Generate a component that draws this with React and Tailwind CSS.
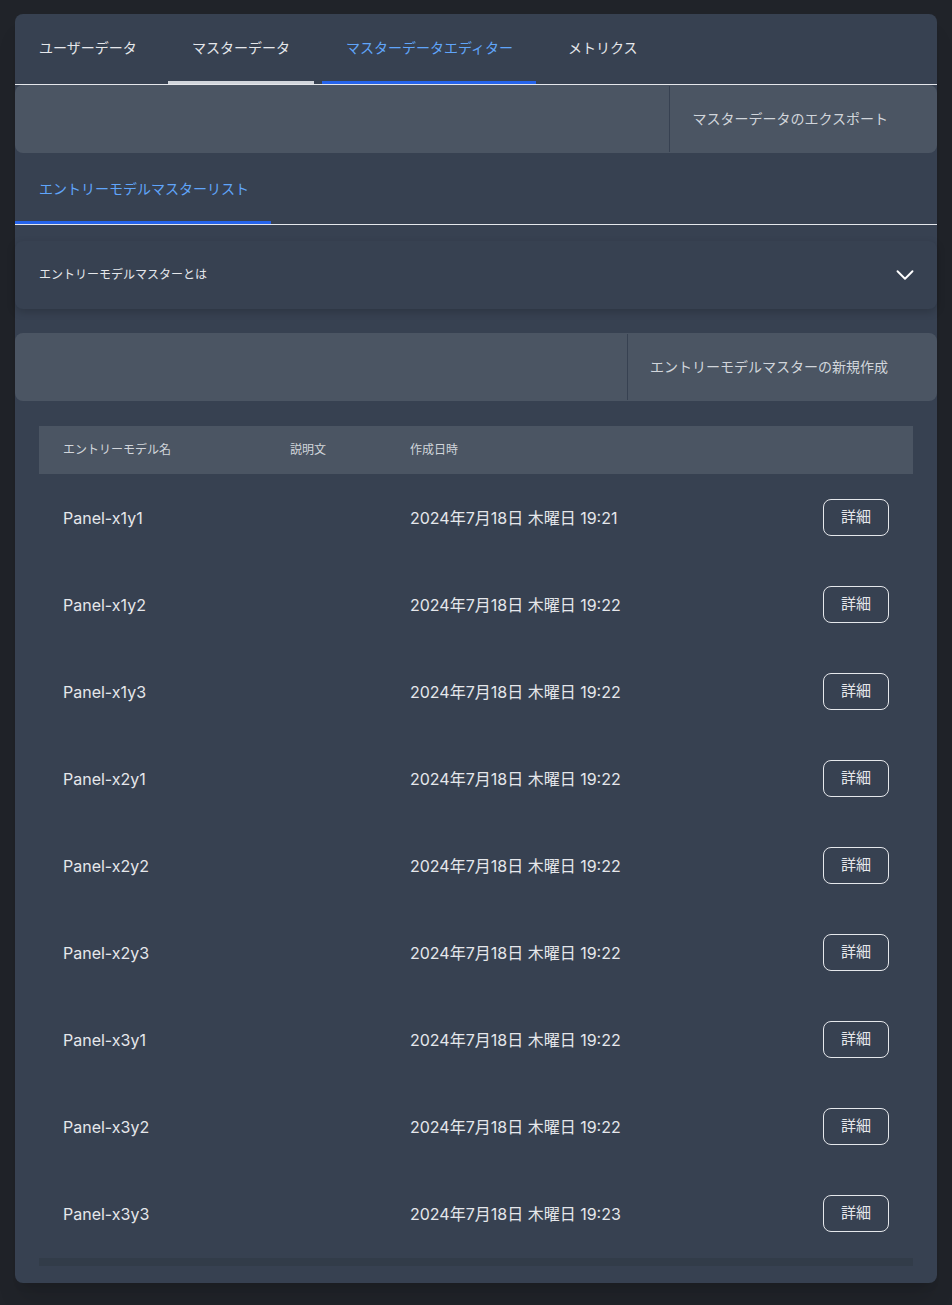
import React from 'react';
import { ChevronDown } from 'lucide-react';

const tabs = [
  { label: 'ユーザーデータ', w: 'w-[145px]', state: 'idle' },
  { label: 'マスターデータ', w: 'w-[146px]', state: 'gray' },
  { label: 'マスターデータエディター', w: 'w-[214px]', state: 'active' },
  { label: 'メトリクス', w: 'w-[140px]', state: 'idle' },
];

const rows = [
  ['Panel-x1y1', '19:21'],
  ['Panel-x1y2', '19:22'],
  ['Panel-x1y3', '19:22'],
  ['Panel-x2y1', '19:22'],
  ['Panel-x2y2', '19:22'],
  ['Panel-x2y3', '19:22'],
  ['Panel-x3y1', '19:22'],
  ['Panel-x3y2', '19:22'],
  ['Panel-x3y3', '19:23'],
];

const Toolbar = ({ label }) => (
  <div className="flex h-[68px] rounded-lg bg-[#4b5563] pr-6">
    <div className="flex-1" />
    <div className="my-px flex items-center border-l border-[#374151] pl-[22px] pr-[25px]">
      <span className="text-sm text-[#d1d5db]">{label}</span>
    </div>
  </div>
);

export default function App() {
  return (
    <div
      className="min-h-[1305px] bg-[#202329] px-[15px] pt-[14px] pb-[23px]"
      style={{ fontFamily: 'Inter, "Noto Sans CJK JP", sans-serif' }}
    >
      <div className="rounded-lg bg-[#374151] pb-[17px] shadow-xl">
        {/* Top tabs */}
        <div className="flex h-[71px] gap-2 border-b border-[#e5e7eb]">
          {tabs.map((t) => (
            <div key={t.label} className={`relative flex items-center pl-6 ${t.w}`}>
              <span
                className={`-mt-[2px] text-sm ${
                  t.state === 'active' ? 'text-[#60a5fa]' : 'text-[#e5e7eb]'
                }`}
              >
                {t.label}
              </span>
              {t.state === 'active' && (
                <div className="absolute bottom-0 left-0 right-0 h-[3px] bg-[#2563eb]" />
              )}
              {t.state === 'gray' && (
                <div className="absolute bottom-0 left-0 right-0 h-[3px] bg-[#d1d5db]" />
              )}
            </div>
          ))}
        </div>

        <Toolbar label="マスターデータのエクスポート" />

        {/* Sub tab */}
        <div className="flex h-[72px] border-b border-[#e5e7eb]">
          <div className="relative flex w-[256px] items-center pl-6">
            <span className="text-sm text-[#60a5fa]">エントリーモデルマスターリスト</span>
            <div className="absolute bottom-0 left-0 right-0 h-[3px] bg-[#2563eb]" />
          </div>
        </div>

        {/* Accordion */}
        <div className="mt-4 flex h-[68px] items-center justify-between rounded-lg bg-[#374151] pl-6 pr-[17px] shadow-[0_3px_8px_rgba(0,0,0,0.18)]">
          <span className="text-xs text-[#e5e7eb]">エントリーモデルマスターとは</span>
          <ChevronDown size={30} strokeWidth={1.5} className="text-white" />
        </div>

        <div className="mt-6">
          <Toolbar label="エントリーモデルマスターの新規作成" />
        </div>

        {/* Table */}
        <div className="mx-6 mt-[25px]">
          <div className="flex h-[48px] items-center bg-[#4b5563] text-xs text-[#d1d5db]">
            <div className="w-[227px] pl-6">エントリーモデル名</div>
            <div className="w-[120px] pl-6">説明文</div>
            <div className="pl-6">作成日時</div>
          </div>
          {rows.map(([name, time]) => (
            <div key={name} className="flex h-[87px] items-center text-base text-[#e5e7eb]">
              <div className="w-[227px] pl-6">{name}</div>
              <div className="w-[120px] pl-6" />
              <div className="flex-1 pl-6">2024年7月18日 木曜日 {time}</div>
              <div className="pr-6">
                <button className="h-[37px] w-[66px] rounded-lg border border-[#e5e7eb] text-[15px] text-[#e5e7eb]">
                  詳細
                </button>
              </div>
            </div>
          ))}
          <div className="mt-px h-[8px] bg-[#323c49]" />
        </div>
      </div>
    </div>
  );
}
